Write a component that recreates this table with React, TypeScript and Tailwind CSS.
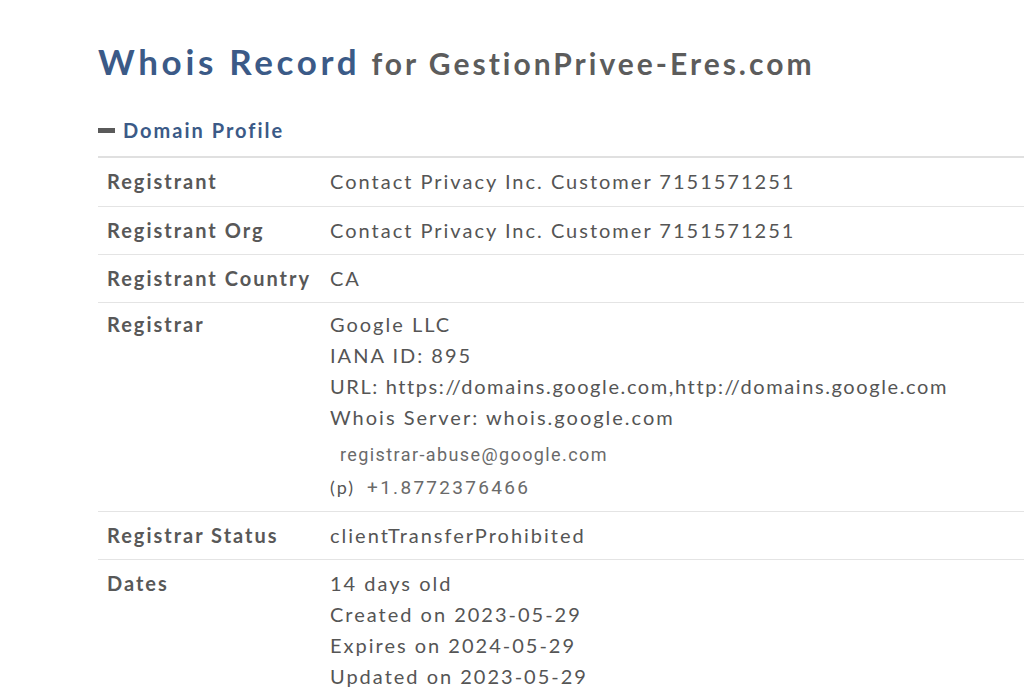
const rows: { label: string; value: string }[] = [
  { label: 'Registrant', value: 'Contact Privacy Inc. Customer 7151571251' },
  { label: 'Registrant Org', value: 'Contact Privacy Inc. Customer 7151571251' },
  { label: 'Registrant Country', value: 'CA' },
];

function Row({ label, children, className = 'pt-[12px] pb-[12px]' }: { label: string; children: React.ReactNode; className?: string }) {
  return (
    <div className={`flex border-b border-[#e4e4e4] ${className}`}>
      <div className="w-[232px] shrink-0 pl-[9px] font-bold text-[#585858]">{label}</div>
      <div className="flex flex-col text-[#555]">{children}</div>
    </div>
  );
}

export default function App() {
  return (
    <div
      className="min-h-[697px] bg-white pl-[98px] pt-[36px] text-[20px] leading-[23px] tracking-[0.1em]"
      style={{ fontFamily: 'Lato, "Open Sans", sans-serif' }}
    >
      <h1 className="flex items-baseline gap-[11px] whitespace-nowrap font-bold">
        <span className="text-[35px] leading-[50px] tracking-[0.105em] text-[#3b5a87]">Whois Record</span>
        <span className="text-[30px] tracking-[0.1em] text-[#5c5c5c]">for GestionPrivee-Eres.com</span>
      </h1>

      <div className="mt-[33px] flex items-center gap-[8px] font-bold text-[#3b5a87]">
        <span className="h-[5px] w-[17px] bg-[#5a5a5a]" />
        <span>Domain Profile</span>
      </div>

      <div className="mt-[14px] border-t-[2px] border-[#e0e0e0]">
        {rows.map((r, i) => (
          <Row key={r.label} label={r.label} className={i === 0 ? 'pt-[12px] pb-[13px]' : 'pt-[12px] pb-[12px]'}>
            {r.value}
          </Row>
        ))}
        <Row label="Registrar" className="pt-[10px] pb-[12px]">
          <div className="flex flex-col gap-[8px]">
            <span>Google LLC</span>
            <span>IANA ID: 895</span>
            <span className="tracking-[1.6px]">URL: https://domains.google.com,http://domains.google.com</span>
            <span>Whois Server: whois.google.com</span>
          </div>
          <div
            className="mt-[15px] pl-[10px] text-[18px] leading-[22px] tracking-[1.4px] text-[#6a6a6a]"
            style={{ fontFamily: 'Roboto, sans-serif' }}
          >
            registrar-abuse@google.com
          </div>
          <div className="mt-[10px] flex items-center gap-[12px]">
            <span className="text-[18px]">(p)</span>
            <span
              className="text-[19px] leading-[22px] tracking-[2.3px] text-[#6a6a6a]"
              style={{ fontFamily: 'Roboto, sans-serif' }}
            >
              +1.8772376466
            </span>
          </div>
        </Row>
        <Row label="Registrar Status">clientTransferProhibited</Row>
        <Row label="Dates">
          <div className="flex flex-col gap-[8px]">
            <span>14 days old</span>
            <span>Created on 2023-05-29</span>
            <span>Expires on 2024-05-29</span>
            <span>Updated on 2023-05-29</span>
          </div>
        </Row>
      </div>
    </div>
  );
}
